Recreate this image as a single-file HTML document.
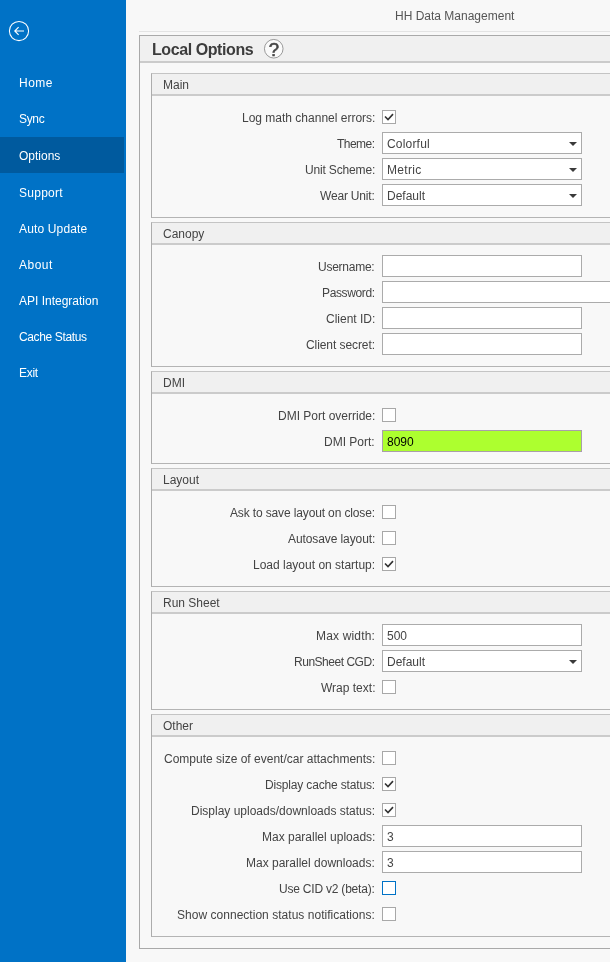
<!DOCTYPE html><html><head><meta charset='utf-8'><style>
*{margin:0;padding:0;box-sizing:border-box}
html,body{width:610px;height:962px;overflow:hidden;background:#f8f8f8;font-family:"Liberation Sans", sans-serif;}
.a{position:absolute}
.t,.lbl,.nav,text{will-change:transform}
.t{position:absolute;white-space:pre;line-height:20px;font-size:12px;color:#444444}
.lbl{position:absolute;white-space:pre;line-height:20px;font-size:12px;color:#444444;right:236px;text-align:right}
.nav{position:absolute;left:19px;white-space:pre;line-height:20px;font-size:12px;color:#fff}
.sec{position:absolute;left:151px;width:480px;background:#f8f8f8;border-left:1px solid #acacac;border-top:1px solid #c4c4c4;border-bottom:1px solid #b4b4b4}
.sh{position:absolute;left:0;top:0;right:0;height:22px;background:#f0f0f0;border-bottom:2px solid #cbcbcb}
.tb{position:absolute;left:382px;width:200px;height:22px;background:#fff;border:1px solid #ababab}
.cb{position:absolute;left:382px;width:14px;height:14px;background:#fff;border:1px solid #a8a8a8}
</style></head><body>
<div class='a' style='left:0;top:0;width:126px;height:962px;background:#0072c6'></div>
<div class='a' style='left:0;top:137px;width:124px;height:36px;background:#005a9e'></div>
<svg class='a' style='left:0;top:0' width='60' height='60' viewBox='0 0 60 60'>
<circle cx='19' cy='31' r='9.6' fill='none' stroke='#fff' stroke-width='1.05'/>
<path d='M24 31 H14.8 M18.6 27.2 L14.8 31 L18.6 34.8' fill='none' stroke='#fff' stroke-width='1.15'/>
</svg>
<div class='nav' style='top:73.00px;letter-spacing:0.5px'>Home</div>
<div class='nav' style='top:108.80px;letter-spacing:-0.333px'>Sync</div>
<div class='nav' style='top:145.60px;letter-spacing:0px'>Options</div>
<div class='nav' style='top:182.50px;letter-spacing:0.267px'>Support</div>
<div class='nav' style='top:218.70px;letter-spacing:0.15px'>Auto Update</div>
<div class='nav' style='top:254.90px;letter-spacing:0.5px'>About</div>
<div class='nav' style='top:291.00px;letter-spacing:0px'>API Integration</div>
<div class='nav' style='top:327.00px;letter-spacing:-0.364px'>Cache Status</div>
<div class='nav' style='top:362.70px;letter-spacing:-0.267px'>Exit</div>
<div class='t' style='left:395px;top:6px;color:#555'>HH Data Management</div>
<div class='a' style='left:139px;top:31px;width:471px;height:1px;background:#e3e3e3'></div>
<div class='a' style='left:139px;top:35px;width:500px;height:914px;border:1px solid #a9a9a9;background:#f8f8f8'></div>
<div class='a' style='left:140px;top:36px;width:480px;height:27px;background:#f0f0f0;border-bottom:2px solid #cbcbcb'></div>
<div class='t' style='left:152px;top:40px;font-size:16px;font-weight:bold;letter-spacing:-0.42px;color:#3c3c3c'>Local Options</div>
<svg class='a' style='left:262px;top:37px' width='24' height='24' viewBox='0 0 24 24'>
<circle cx='11.75' cy='11.75' r='9.3' fill='#fafafa' stroke='#8e8e8e' stroke-width='0.9'/>
<text x='11.9' y='18.9' text-anchor='middle' font-family='Liberation Sans' font-size='18.5' fill='#444' stroke='#444' stroke-width='0.55'>?</text>
</svg>
<div class='sec' style='top:73px;height:145px'><div class='sh'></div></div>
<div class='t' style='left:163px;top:75px'>Main</div>
<div class='lbl' style='top:108px;right:235.000px;letter-spacing:0px'>Log math channel errors:</div>
<div class='cb' style='top:110px;'></div>
<svg class='a' style='left:382px;top:110px' width='14' height='14' viewBox='0 0 14 14'><path d='M3 6.5 L6 9.6 L11 4.1' fill='none' stroke='#333' stroke-width='1.6'/></svg>
<div class='lbl' style='top:134px;right:235.540px;letter-spacing:-0.54px'>Theme:</div>
<div class='tb' style='top:132px'></div>
<div class='t' style='left:387px;top:134px;letter-spacing:0.186px'>Colorful</div>
<svg class='a' style='left:569px;top:142px' width='8' height='4' viewBox='0 0 8 4'><path d='M0 0H8L4 4Z' fill='#3a3a3a'/></svg>
<div class='lbl' style='top:160px;right:235.164px;letter-spacing:-0.164px'>Unit Scheme:</div>
<div class='tb' style='top:158px'></div>
<div class='t' style='left:387px;top:160px;letter-spacing:0.3px'>Metric</div>
<svg class='a' style='left:569px;top:168px' width='8' height='4' viewBox='0 0 8 4'><path d='M0 0H8L4 4Z' fill='#3a3a3a'/></svg>
<div class='lbl' style='top:186px;right:235.189px;letter-spacing:-0.189px'>Wear Unit:</div>
<div class='tb' style='top:184px'></div>
<div class='t' style='left:387px;top:186px;letter-spacing:0px'>Default</div>
<svg class='a' style='left:569px;top:194px' width='8' height='4' viewBox='0 0 8 4'><path d='M0 0H8L4 4Z' fill='#3a3a3a'/></svg>
<div class='sec' style='top:222px;height:145px'><div class='sh'></div></div>
<div class='t' style='left:163px;top:224px'>Canopy</div>
<div class='lbl' style='top:257px;right:235.250px;letter-spacing:-0.25px'>Username:</div>
<div class='tb' style='top:255px;width:200px;background:#fff;border-color:#ababab'></div>
<div class='lbl' style='top:283px;right:235.375px;letter-spacing:-0.375px'>Password:</div>
<div class='tb' style='top:281px;width:300px;background:#fff;border-color:#ababab'></div>
<div class='lbl' style='top:309px;right:235.000px;letter-spacing:0px'>Client ID:</div>
<div class='tb' style='top:307px;width:200px;background:#fff;border-color:#ababab'></div>
<div class='lbl' style='top:335px;right:235.077px;letter-spacing:-0.077px'>Client secret:</div>
<div class='tb' style='top:333px;width:200px;background:#fff;border-color:#ababab'></div>
<div class='sec' style='top:371px;height:93px'><div class='sh'></div></div>
<div class='t' style='left:163px;top:373px'>DMI</div>
<div class='lbl' style='top:406px;right:235.000px;letter-spacing:0px'>DMI Port override:</div>
<div class='cb' style='top:408px;'></div>
<div class='lbl' style='top:432px;right:235.000px;letter-spacing:0px'>DMI Port:</div>
<div class='tb' style='top:430px;width:200px;background:#adff2f;border-color:#a99fa9'></div>
<div class='t' style='left:387px;top:432px;color:#000;'>8090</div>
<div class='sec' style='top:468px;height:119px'><div class='sh'></div></div>
<div class='t' style='left:163px;top:470px'>Layout</div>
<div class='lbl' style='top:503px;right:235.137px;letter-spacing:-0.137px'>Ask to save layout on close:</div>
<div class='cb' style='top:505px;'></div>
<div class='lbl' style='top:529px;right:235.093px;letter-spacing:-0.093px'>Autosave layout:</div>
<div class='cb' style='top:531px;'></div>
<div class='lbl' style='top:555px;right:235.000px;letter-spacing:0px'>Load layout on startup:</div>
<div class='cb' style='top:557px;'></div>
<svg class='a' style='left:382px;top:557px' width='14' height='14' viewBox='0 0 14 14'><path d='M3 6.5 L6 9.6 L11 4.1' fill='none' stroke='#333' stroke-width='1.6'/></svg>
<div class='sec' style='top:591px;height:119px'><div class='sh'></div></div>
<div class='t' style='left:163px;top:593px'>Run Sheet</div>
<div class='lbl' style='top:626px;right:234.833px;letter-spacing:0.167px'>Max width:</div>
<div class='tb' style='top:624px;width:200px;background:#fff;border-color:#ababab'></div>
<div class='t' style='left:387px;top:626px;'>500</div>
<div class='lbl' style='top:652px;right:235.475px;letter-spacing:-0.475px'>RunSheet CGD:</div>
<div class='tb' style='top:650px'></div>
<div class='t' style='left:387px;top:652px;letter-spacing:0px'>Default</div>
<svg class='a' style='left:569px;top:660px' width='8' height='4' viewBox='0 0 8 4'><path d='M0 0H8L4 4Z' fill='#3a3a3a'/></svg>
<div class='lbl' style='top:678px;right:235.000px;letter-spacing:0px'>Wrap text:</div>
<div class='cb' style='top:680px;'></div>
<div class='sec' style='top:714px;height:223px'><div class='sh'></div></div>
<div class='t' style='left:163px;top:716px'>Other</div>
<div class='lbl' style='top:749px;right:235.000px;letter-spacing:0px'>Compute size of event/car attachments:</div>
<div class='cb' style='top:751px;'></div>
<div class='lbl' style='top:775px;right:235.165px;letter-spacing:-0.165px'>Display cache status:</div>
<div class='cb' style='top:777px;'></div>
<svg class='a' style='left:382px;top:777px' width='14' height='14' viewBox='0 0 14 14'><path d='M3 6.5 L6 9.6 L11 4.1' fill='none' stroke='#333' stroke-width='1.6'/></svg>
<div class='lbl' style='top:801px;right:235.000px;letter-spacing:0px'>Display uploads/downloads status:</div>
<div class='cb' style='top:803px;'></div>
<svg class='a' style='left:382px;top:803px' width='14' height='14' viewBox='0 0 14 14'><path d='M3 6.5 L6 9.6 L11 4.1' fill='none' stroke='#333' stroke-width='1.6'/></svg>
<div class='lbl' style='top:827px;right:235.000px;letter-spacing:0px'>Max parallel uploads:</div>
<div class='tb' style='top:825px;width:200px;background:#fff;border-color:#ababab'></div>
<div class='t' style='left:387px;top:827px;'>3</div>
<div class='lbl' style='top:853px;right:235.000px;letter-spacing:0px'>Max parallel downloads:</div>
<div class='tb' style='top:851px;width:200px;background:#fff;border-color:#ababab'></div>
<div class='t' style='left:387px;top:853px;'>3</div>
<div class='lbl' style='top:879px;right:235.212px;letter-spacing:-0.212px'>Use CID v2 (beta):</div>
<div class='cb' style='top:881px;border-color:#0072c6;'></div>
<div class='lbl' style='top:905px;right:234.972px;letter-spacing:0.028px'>Show connection status notifications:</div>
<div class='cb' style='top:907px;'></div>
</body></html>
